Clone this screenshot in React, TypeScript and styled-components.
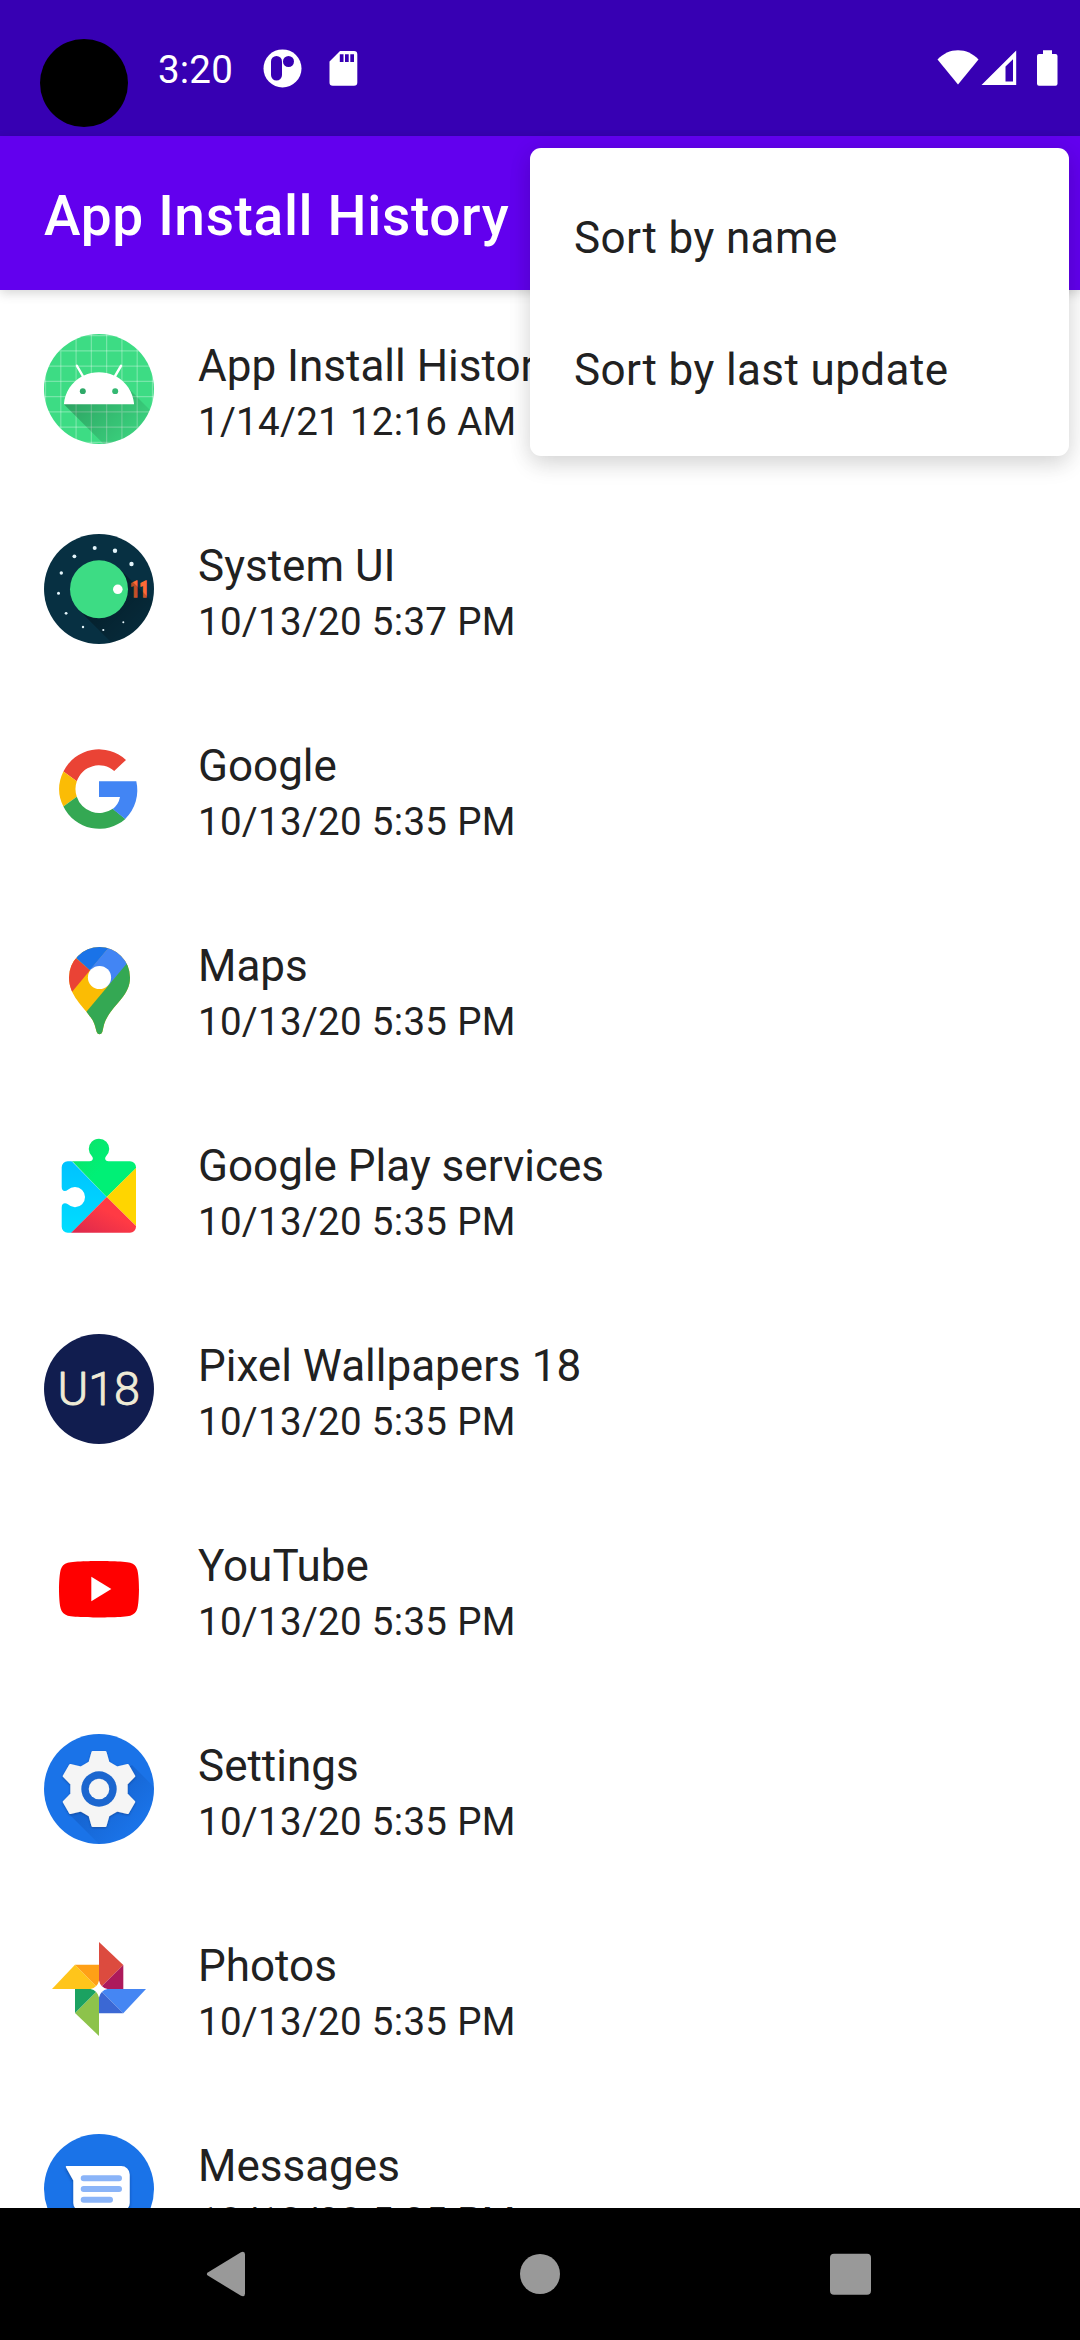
import React from "react";
import styled, { createGlobalStyle } from "styled-components";

const GlobalStyle = createGlobalStyle`
  *, *::before, *::after { box-sizing: border-box; }
  body {
    margin: 0;
    background: #fff;
    font-family: Roboto, "Noto Sans", sans-serif;
    color: #212121;
  }
`;

const Screen = styled.div`
  width: 1080px;
  height: 2340px;
  display: flex;
  flex-direction: column;
  overflow: hidden;
  background: #fff;
`;

const StatusBar = styled.header`
  flex: 0 0 136px;
  display: flex;
  align-items: flex-start;
  justify-content: space-between;
  padding: 39px 21px 0 40px;
  background: #3700b3;
  color: #fff;
`;

const StatusGroup = styled.div`
  display: flex;
  align-items: flex-start;
`;

const CameraCutout = styled.div`
  width: 88px;
  height: 88px;
  border-radius: 50%;
  background: #000;
`;

const Clock = styled.span`
  width: 75px;
  margin: 8px 29px 0 30px;
  font-size: 38.5px;
  line-height: 46px;
  letter-spacing: 0.2px;
  white-space: nowrap;
`;

const StatusGlyph = styled.svg<{ $gap?: number }>`
  display: block;
  margin-top: 9px;
  margin-left: ${(p) => p.$gap ?? 0}px;
`;

const Toolbar = styled.div`
  position: relative;
  z-index: 1;
  flex: 0 0 154px;
  display: flex;
  align-items: center;
  padding-left: 44px;
  background: #6200ee;
  box-shadow: 0 4px 11px rgba(0, 0, 0, 0.12), 0 1px 10px rgba(0, 0, 0, 0.05);
`;

const Title = styled.h1`
  margin: 6px 0 0;
  font-size: 55px;
  line-height: 64px;
  font-weight: 500;
  letter-spacing: 0.66px;
  color: #fff;
`;

const Menu = styled.div`
  position: absolute;
  top: 12px;
  right: 11px;
  width: 539px;
  padding: 22px 0;
  border-radius: 11px;
  background: #fff;
  box-shadow: 0 9px 22px rgba(0, 0, 0, 0.12), 0 2px 26px rgba(0, 0, 0, 0.07);
`;

const MenuItem = styled.div`
  height: 132px;
  display: flex;
  align-items: center;
  padding: 4px 44px 0;
  font-size: 44px;
  letter-spacing: 0.4px;
`;

const AppList = styled.main`
  flex: 1 1 0;
  min-height: 0;
  overflow: hidden;
`;

const AppRow = styled.div`
  height: 200px;
  display: flex;
  align-items: flex-start;
  gap: 44px;
  padding: 44px 44px 0;
`;

const IconBox = styled.svg`
  display: block;
  flex: none;
  width: 110px;
  height: 110px;
`;

const RowText = styled.div`
  display: flex;
  flex-direction: column;
  padding-top: 6px;
`;

const AppName = styled.span`
  font-size: 44px;
  line-height: 52px;
  white-space: nowrap;
`;

const AppDate = styled.span`
  margin-top: 7px;
  font-size: 38.5px;
  line-height: 46px;
  letter-spacing: 0.3px;
  white-space: nowrap;
`;

const NavBar = styled.nav`
  flex: 0 0 132px;
  display: flex;
  align-items: center;
  justify-content: space-between;
  padding: 0 208px 0 204px;
  background: #000;
`;

const NavGlyph = styled.svg`
  display: block;
  width: 44px;
  height: 48px;
  fill: #999;
`;

const gridLines = [19, 29, 39, 49, 59, 69, 79, 89];

const AndroidIcon = () => (
  <IconBox viewBox="18 18 72 72">
    <defs>
      <clipPath id="androidClip"><circle cx="54" cy="54" r="36" /></clipPath>
      <linearGradient id="androidShade" gradientUnits="userSpaceOnUse" x1="42.95" y1="49.6" x2="85.85" y2="92.5">
        <stop offset="0" stopColor="#000" stopOpacity="0.27" />
        <stop offset="1" stopColor="#000" stopOpacity="0" />
      </linearGradient>
    </defs>
    <g clipPath="url(#androidClip)">
      <rect x="18" y="18" width="72" height="72" fill="#3ddc84" />
      {gridLines.map((n) => (
        <path key={n} d={`M${n},18V90M18,${n}H90`} stroke="#fff" strokeOpacity="0.3" strokeWidth="0.8" />
      ))}
      <path fill="url(#androidShade)" d="M31,63.928c0,0 6.4,-11 12.1,-13.1c7.2,-2.6 26,-1.4 26,-1.4l38.1,38.1L107,108.928l-32,-1L31,63.928z" />
      <path fill="#fff" d="M65.3,45.828l3.8,-6.6c0.2,-0.4 0.1,-0.9 -0.3,-1.1c-0.4,-0.2 -0.9,-0.1 -1.1,0.3l-3.9,6.7c-6.3,-2.8 -13.4,-2.8 -19.7,0l-3.9,-6.7c-0.2,-0.4 -0.7,-0.5 -1.1,-0.3C38.8,38.328 38.7,38.828 38.9,39.228l3.8,6.6C36.2,49.428 31.7,56.028 31,63.928h46C76.3,56.028 71.8,49.428 65.3,45.828z" />
      <circle cx="43.4" cy="55.4" r="1.95" fill="#2ea968" />
      <circle cx="64.6" cy="55.4" r="1.95" fill="#34b872" />
    </g>
  </IconBox>
);

const stars = [
  [50.7, 14, 2], [71, 16.7, 2.2], [87.5, 30, 2.2], [30.4, 22.3, 1.9], [17.3, 39, 1.7],
  [14.5, 59.3, 1.5], [22.1, 79.3, 1.4], [39, 93, 1.2], [59.3, 96, 1.1], [79.3, 88.3, 1],
];

const SystemIcon = () => (
  <IconBox viewBox="0 0 110 110">
    <defs>
      <clipPath id="systemClip"><circle cx="55" cy="55" r="55" /></clipPath>
      <linearGradient id="systemShade" gradientUnits="userSpaceOnUse" x1="55" y1="55" x2="100" y2="100">
        <stop offset="0" stopColor="#000" stopOpacity="0.36" />
        <stop offset="1" stopColor="#000" stopOpacity="0.1" />
      </linearGradient>
    </defs>
    <circle cx="55" cy="55" r="55" fill="#073042" />
    <text x="86.300" y="62.500" fill="#ff6b35" stroke="#ff6b35" strokeWidth="1.300" fontFamily="Roboto, sans-serif" fontWeight="900" fontSize="21.500" textLength="18.500" lengthAdjust="spacingAndGlyphs">11</text>
    <path clipPath="url(#systemClip)" d="M34.5 75.7L75.5 34.7L116 75L75 116Z" fill="url(#systemShade)" />
    {stars.map(([x, y, r]) => <circle key={x} cx={x} cy={y} r={r} fill="#e4f5fb" />)}
    <circle cx="55" cy="55.2" r="29" fill="#3ddc84" />
    <circle cx="73.8" cy="55.3" r="4.8" fill="#fff" />
  </IconBox>
);

const GoogleIcon = () => (
  <IconBox viewBox="0 0 110 110">
    <path fill="#ea4335" d="M82 25.9A39.8 39.8 0 0 0 19.4 37.4L32.8 47.3A23.4 23.4 0 0 1 70.2 36.9Z" />
    <path fill="#fbbc05" d="M19.4 37.4A39.8 39.8 0 0 0 19.4 72.6L32.8 62.7A23.4 23.4 0 0 1 32.8 47.3Z" />
    <path fill="#34a853" d="M19.4 72.6A39.8 39.8 0 0 0 81.4 84.9L68.7 74.7A23.4 23.4 0 0 1 32.8 62.7Z" />
    <path fill="#4285f4" d="M55 47.3H92.3A39.8 39.8 0 0 1 81.2 84.9L68.7 74.9Q74.6 70.6 76 63H55Z" />
  </IconBox>
);

const MapsIcon = () => (
  <IconBox viewBox="0 0 110 110">
    <defs>
      <clipPath id="mapsClip">
        <path d="M55.5 13A30.5 30.5 0 0 1 86 43.5C86 62 70 69 61.5 86.500C59.500 91 59.300 95 58.300 98Q57.500 100.200 55.500 100.200Q53.500 100.200 52.700 98C51.500 94.500 51 89.500 47.500 84.500C40 73 25 62 25 43.500A30.500 30.500 0 0 1 55.500 13Z" />
      </clipPath>
    </defs>
    <g clipPath="url(#mapsClip)">
      <rect width="110" height="110" fill="#fbbc04" />
      <path d="M20 67.600L46 36.300L20 14.100Z" fill="#ea4335" />
      <path d="M20 13.400L46 36.300L70 7.500V0H20Z" fill="#1a73e8" />
      <path d="M45.800 36L76.100 0H110V0L63.600 52.500L55 43.500Z" fill="#4285f4" />
      <path d="M38 83.100L99.200 10H110V110H38Z" fill="#34a853" />
    </g>
    <circle cx="55.5" cy="43.5" r="11.6" fill="#fff" />
  </IconBox>
);

const PlayServicesIcon = () => (
  <IconBox viewBox="0 0 110 110">
    <defs>
      <clipPath id="playClip">
        <path d="M23.700 27.300H45.500C48.500 27.300 49.800 24.800 48.100 22.400A10.200 10.200 0 1 1 61.900 22.400C60.200 24.800 61.500 27.300 64.500 27.300H86A6 6 0 0 1 92 33.300V92.700A6 6 0 0 1 86 98.700H23.700A6 6 0 0 1 17.700 92.700V73.500C17.700 69.500 20.700 68.300 23.900 70.300A10.100 10.100 0 1 0 23.900 55.800C20.700 58.300 17.700 57 17.700 52.700V33.300A6 6 0 0 1 23.700 27.300Z" />
      </clipPath>
      <linearGradient id="playBlue" x1="0" y1="0" x2="0" y2="1">
        <stop offset="0.2" stopColor="#00c3ff" />
        <stop offset="1" stopColor="#00e5ff" />
      </linearGradient>
      <linearGradient id="playRed" x1="1" y1="0" x2="0" y2="1">
        <stop offset="0.4" stopColor="#ff3a44" />
        <stop offset="1" stopColor="#d4244f" />
      </linearGradient>
      <linearGradient id="playGreen" x1="0" y1="0" x2="1" y2="1">
        <stop offset="0" stopColor="#10df66" />
        <stop offset="0.5" stopColor="#00f076" />
      </linearGradient>
    </defs>
    <g clipPath="url(#playClip)">
      <path d="M10 9L62.700 63L10 116.500Z" fill="url(#playBlue)" />
      <path d="M28.300 27.300V0H92V34.300L62.700 63Z" fill="url(#playGreen)" />
      <path d="M62.700 63L98 28V98Z" fill="#ffd500" />
      <path d="M62.700 63L98 98V104H22Z" fill="url(#playRed)" />
    </g>
  </IconBox>
);

const WallpaperIcon = () => (
  <IconBox viewBox="0 0 110 110">
    <circle cx="55" cy="55" r="55" fill="#111d4f" />
    <text x="13.500" y="71.200" fill="#efebd6" stroke="#efebd6" strokeWidth="0.900" strokeLinejoin="round" fontFamily="Roboto, sans-serif" fontWeight="300" fontSize="45.500" textLength="82.500" lengthAdjust="spacingAndGlyphs">U18</text>
  </IconBox>
);

const YouTubeIcon = () => (
  <IconBox viewBox="0 0 110 110">
    <g transform="translate(15 15.200) scale(3.3333)">
      <path fill="#f00" d="M23.498 6.186a3.016 3.016 0 0 0-2.122-2.136C19.505 3.545 12 3.545 12 3.545s-7.505 0-9.377.505A3.017 3.017 0 0 0 .502 6.186C0 8.070 0 12 0 12s0 3.930.502 5.814a3.016 3.016 0 0 0 2.122 2.136c1.871.505 9.376.505 9.376.505s7.505 0 9.377-.505a3.015 3.015 0 0 0 2.122-2.136C24 15.930 24 12 24 12s0-3.930-.502-5.814z" />
      <path fill="#fff" d="M9.700 15.650V8.270L15.700 11.960z" />
    </g>
  </IconBox>
);

// One sixth of the gear outline (valley edge, then tooth), repeated every 60 degrees.
const gearSector: [number, number][] = [[-9.200, -26.300], [-6.300, -36.700], [6.300, -36.700], [9.200, -26.300]];
const gearPoints = Array.from({ length: 6 }, (_, k) => {
  const a = (k * Math.PI) / 3;
  return gearSector
    .map(([x, y]) => `${(55 + x * Math.cos(a) - y * Math.sin(a)).toFixed(2)},${(55 + x * Math.sin(a) + y * Math.cos(a)).toFixed(2)}`)
    .join(" ");
}).join(" ");

const SettingsIcon = () => (
  <IconBox viewBox="0 0 110 110">
    <defs>
      <clipPath id="settingsClip"><circle cx="55" cy="55" r="55" /></clipPath>
      <linearGradient id="settingsShade" gradientUnits="userSpaceOnUse" x1="60" y1="60" x2="92" y2="92">
        <stop offset="0" stopColor="#0b3f96" stopOpacity="0.26" />
        <stop offset="1" stopColor="#0b3f96" stopOpacity="0" />
      </linearGradient>
      <filter id="gearShadow" x="-20%" y="-20%" width="140%" height="140%">
        <feDropShadow dx="0" dy="1" stdDeviation="1.2" floodColor="#08306f" floodOpacity="0.5" />
      </filter>
    </defs>
    <g clipPath="url(#settingsClip)">
      <rect width="110" height="110" fill="#1a73e8" />
      <path d="M25 80L88 31L130 73L68 123Z" fill="url(#settingsShade)" />
      <g filter="url(#gearShadow)">
        <polygon points={gearPoints} fill="#f5f5f5" stroke="#f5f5f5" strokeWidth="2.600" strokeLinejoin="round" />
      </g>
      <circle cx="55" cy="55" r="17.700" fill="#1b66cf" />
      <circle cx="55" cy="55" r="10.300" fill="#f5f5f5" />
    </g>
  </IconBox>
);

const PhotosIcon = () => (
  <IconBox viewBox="0 0 110 110">
    <path d="M55 55V8L79.300 31Z" fill="#dc4b3f" />
    <path d="M55 55L79.300 31V55Z" fill="#ad1a5b" />
    <path d="M55 55H102L79.300 79.300Z" fill="#4586f3" />
    <path d="M55 55L79.300 79.300H55Z" fill="#3b68d4" />
    <path d="M55 55V102L31 79Z" fill="#8dc34b" />
    <path d="M55 55L31 79V55Z" fill="#1ba261" />
    <path d="M55 55H8L31 30.700Z" fill="#ffc51b" />
    <path d="M55 55L31 30.700H55Z" fill="#ffa016" />
    <path d="M55 46.500Q56.500 53.500 63.500 55Q56.500 56.500 55 63.500Q53.500 56.500 46.500 55Q53.500 53.500 55 46.500Z" fill="#fff" />
  </IconBox>
);

const MessagesIcon = () => (
  <IconBox viewBox="0 0 110 110">
    <defs>
      <filter id="bubbleShadow" x="-20%" y="-20%" width="140%" height="150%">
        <feDropShadow dx="0" dy="2" stdDeviation="1.800" floodColor="#06306f" floodOpacity="0.55" />
      </filter>
    </defs>
    <circle cx="55" cy="55" r="55" fill="#1a73e8" />
    <path filter="url(#bubbleShadow)" d="M22.500 32H77.200A8.500 8.500 0 0 1 85.700 40.500V69A8.500 8.500 0 0 1 77.200 77.500H37.800A8.500 8.500 0 0 1 29.300 69V46.500L21.900 33.200Q21.500 32 22.500 32Z" fill="#fff" />
    <path d="M39.700 44.300H75M39.700 55H75M39.700 65.700H66" stroke="#8ab4f8" strokeWidth="6" strokeLinecap="round" />
  </IconBox>
);

const apps = [
  { name: "App Install History", date: "1/14/21 12:16 AM", Icon: AndroidIcon },
  { name: "System UI", date: "10/13/20 5:37 PM", Icon: SystemIcon },
  { name: "Google", date: "10/13/20 5:35 PM", Icon: GoogleIcon },
  { name: "Maps", date: "10/13/20 5:35 PM", Icon: MapsIcon },
  { name: "Google Play services", date: "10/13/20 5:35 PM", Icon: PlayServicesIcon },
  { name: "Pixel Wallpapers 18", date: "10/13/20 5:35 PM", Icon: WallpaperIcon },
  { name: "YouTube", date: "10/13/20 5:35 PM", Icon: YouTubeIcon },
  { name: "Settings", date: "10/13/20 5:35 PM", Icon: SettingsIcon },
  { name: "Photos", date: "10/13/20 5:35 PM", Icon: PhotosIcon },
  { name: "Messages", date: "10/13/20 5:35 PM", Icon: MessagesIcon },
];

export default function App() {
  return (
    <>
      <GlobalStyle />
      <Screen>
        <StatusBar>
          <StatusGroup>
            <CameraCutout />
            <Clock>3:20</Clock>
            <StatusGlyph width="40" height="40" viewBox="0 0 40 40">
              <circle cx="20.500" cy="20.400" r="19" fill="#fff" />
              <rect x="9" y="8" width="11" height="24.500" rx="5.500" fill="#3700b3" />
              <circle cx="26.500" cy="13.500" r="5.500" fill="#3700b3" />
            </StatusGlyph>
            <StatusGlyph $gap={27} width="30" height="40" viewBox="0 0 30 40">
              <path fill="#fff" d="M11 3H25A3.300 3.300 0 0 1 28.300 6.300V34.500A3.300 3.300 0 0 1 25 37.800H3.800A3.300 3.300 0 0 1 0.500 34.500V13.500Z" />
              <path fill="#3700b3" d="M10.800 6.300h3.700v7.700h-3.700zM16 6.300h3.700v7.700h-3.700zM21.300 6.300h3.700v7.700h-3.700z" />
            </StatusGlyph>
          </StatusGroup>
          <StatusGroup>
            <StatusGlyph width="42" height="40" viewBox="0 0 42 40">
              <path fill="#fff" d="M21 36.500L0.500 11.500C6.500 5.500 13 2.300 21 2.300S35.500 5.500 41.500 11.500Z" />
            </StatusGlyph>
            <StatusGlyph $gap={2} width="36" height="40" viewBox="0 0 36 40">
              <path fill="#fff" fillRule="evenodd" d="M35.200 2.400V37H0.500ZM32 11.200L24.500 18.500V33.500H32Z" />
            </StatusGlyph>
            <StatusGlyph $gap={19} width="23" height="40" viewBox="0 0 23 40">
              <path fill="#fff" d="M7 2.300H16V6H19.500A2 2 0 0 1 21.500 8V35.800A2 2 0 0 1 19.500 37.800H3A2 2 0 0 1 1 35.800V8A2 2 0 0 1 3 6H7Z" />
            </StatusGlyph>
          </StatusGroup>
        </StatusBar>
        <Toolbar>
          <Title>App Install History</Title>
          <Menu>
            <MenuItem>Sort by name</MenuItem>
            <MenuItem>Sort by last update</MenuItem>
          </Menu>
        </Toolbar>
        <AppList>
          {apps.map(({ name, date, Icon }) => (
            <AppRow key={name}>
              <Icon />
              <RowText>
                <AppName>{name}</AppName>
                <AppDate>{date}</AppDate>
              </RowText>
            </AppRow>
          ))}
        </AppList>
        <NavBar>
          <NavGlyph viewBox="0 0 44 48">
            <path d="M4.200 22.200L37 2.200Q41 0.800 41 4.500V43.500Q41 47.200 37 45.800L4.200 25.800Q1.400 24 4.200 22.200Z" />
          </NavGlyph>
          <NavGlyph viewBox="0 0 44 48">
            <circle cx="24" cy="24" r="20" />
          </NavGlyph>
          <NavGlyph viewBox="0 0 44 48">
            <rect x="2" y="3.800" width="41" height="41" rx="4" />
          </NavGlyph>
        </NavBar>
      </Screen>
    </>
  );
}
